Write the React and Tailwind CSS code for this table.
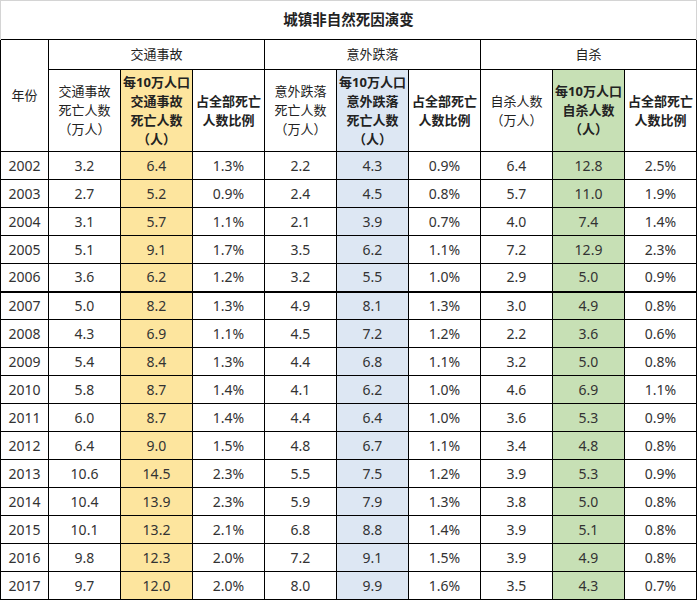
import React from 'react';

const rows = [
  ['2002', '3.2', '6.4', '1.3%', '2.2', '4.3', '0.9%', '6.4', '12.8', '2.5%'],
  ['2003', '2.7', '5.2', '0.9%', '2.4', '4.5', '0.8%', '5.7', '11.0', '1.9%'],
  ['2004', '3.1', '5.7', '1.1%', '2.1', '3.9', '0.7%', '4.0', '7.4', '1.4%'],
  ['2005', '5.1', '9.1', '1.7%', '3.5', '6.2', '1.1%', '7.2', '12.9', '2.3%'],
  ['2006', '3.6', '6.2', '1.2%', '3.2', '5.5', '1.0%', '2.9', '5.0', '0.9%'],
  ['2007', '5.0', '8.2', '1.3%', '4.9', '8.1', '1.3%', '3.0', '4.9', '0.8%'],
  ['2008', '4.3', '6.9', '1.1%', '4.5', '7.2', '1.2%', '2.2', '3.6', '0.6%'],
  ['2009', '5.4', '8.4', '1.3%', '4.4', '6.8', '1.1%', '3.2', '5.0', '0.8%'],
  ['2010', '5.8', '8.7', '1.4%', '4.1', '6.2', '1.0%', '4.6', '6.9', '1.1%'],
  ['2011', '6.0', '8.7', '1.4%', '4.4', '6.4', '1.0%', '3.6', '5.3', '0.9%'],
  ['2012', '6.4', '9.0', '1.5%', '4.8', '6.7', '1.1%', '3.4', '4.8', '0.8%'],
  ['2013', '10.6', '14.5', '2.3%', '5.5', '7.5', '1.2%', '3.9', '5.3', '0.9%'],
  ['2014', '10.4', '13.9', '2.3%', '5.9', '7.9', '1.3%', '3.8', '5.0', '0.8%'],
  ['2015', '10.1', '13.2', '2.1%', '6.8', '8.8', '1.4%', '3.9', '5.1', '0.8%'],
  ['2016', '9.8', '12.3', '2.0%', '7.2', '9.1', '1.5%', '3.9', '4.9', '0.8%'],
  ['2017', '9.7', '12.0', '2.0%', '8.0', '9.9', '1.6%', '3.5', '4.3', '0.7%'],
];

// column tints: index into a row
const tint = {
  2: 'bg-[#fde59e]',
  5: 'bg-[#dde7f3]',
  8: 'bg-[#c7e0b5]',
};

const cell = 'border border-black p-0 text-center align-middle';

function SubHead({ lines, bold, bg = '' }) {
  return (
    <th className={`${cell} ${bg} ${bold ? 'font-bold' : 'font-normal'} leading-[19px] text-[13px] text-[#222]`}>
      {lines.map((l, i) => (
        <div key={i}>{l}</div>
      ))}
    </th>
  );
}

export default function App() {
  return (
    <div
      className="w-[698px] h-[601px] bg-white overflow-hidden"
      style={{ fontFamily: '"Noto Sans", "Noto Sans CJK SC", sans-serif' }}
    >
      <table className="table-fixed border-collapse w-[696px]">
        <colgroup>
          <col className="w-[48px]" />
          {Array.from({ length: 9 }).map((_, i) => (
            <col key={i} className="w-[72px]" />
          ))}
        </colgroup>
        <thead>
          <tr className="h-[39px]">
            <th
              colSpan={10}
              className="border border-b-0 border-[#d4d4d4] text-center text-[14.5px] font-bold text-[#222] p-0"
            >
              城镇非自然死因演变
            </th>
          </tr>
          <tr className="h-[30px]">
            <th rowSpan={2} className={`${cell} font-normal text-[13px] text-[#222]`}>
              年份
            </th>
            <th colSpan={3} className={`${cell} font-normal text-[13px] text-[#222]`}>
              交通事故
            </th>
            <th colSpan={3} className={`${cell} font-normal text-[13px] text-[#222]`}>
              意外跌落
            </th>
            <th colSpan={3} className={`${cell} font-normal text-[13px] text-[#222]`}>
              自杀
            </th>
          </tr>
          <tr className="h-[82px]">
            <SubHead lines={['交通事故', '死亡人数', '（万人）']} />
            <SubHead lines={['每10万人口', '交通事故', '死亡人数', '（人）']} bold bg={tint[2]} />
            <SubHead lines={['占全部死亡', '人数比例']} bold />
            <SubHead lines={['意外跌落', '死亡人数', '（万人）']} />
            <SubHead lines={['每10万人口', '意外跌落', '死亡人数', '（人）']} bold bg={tint[5]} />
            <SubHead lines={['占全部死亡', '人数比例']} bold />
            <SubHead lines={['自杀人数', '（万人）']} />
            <SubHead lines={['每10万人口', '自杀人数', '（人）']} bold bg={tint[8]} />
            <SubHead lines={['占全部死亡', '人数比例']} bold />
          </tr>
        </thead>
        <tbody>
          {rows.map((r) => (
            <tr
              key={r[0]}
              className={`h-[28px] ${r[0] === '2006' ? 'border-b-2 border-black' : ''}`}
            >
              {r.map((v, i) => (
                <td
                  key={i}
                  className={`${cell} ${tint[i] || ''} ${r[0] === '2006' ? 'border-b-2' : ''} text-[14px] text-[#333] leading-none`}
                >
                  {v}
                </td>
              ))}
            </tr>
          ))}
        </tbody>
      </table>
    </div>
  );
}
